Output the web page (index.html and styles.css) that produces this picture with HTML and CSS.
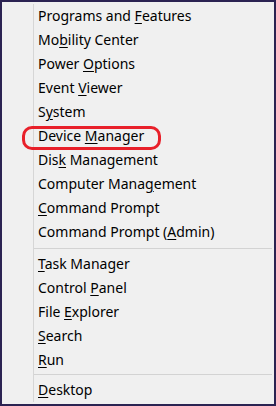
FILE: index.html
```html
<!DOCTYPE html>
<html lang="en">
<head>
    <meta charset="UTF-8">
    <title>Win+X menu</title>
    <link rel="stylesheet" href="styles.css">
</head>
<body>
<div class="menu">
    <ul class="list">
        <li>Programs and <u>F</u>eatures</li>
        <li>Mo<u>b</u>ility Center</li>
        <li>Power <u>O</u>ptions</li>
        <li>Event <u>V</u>iewer</li>
        <li>S<u>y</u>stem</li>
        <li class="marked">Device <u>M</u>anager<span class="ring"></span></li>
        <li>Dis<u>k</u> Management</li>
        <li>Computer Mana<u>g</u>ement</li>
        <li><u>C</u>ommand Prompt</li>
        <li>Command Prompt (<u>A</u>dmin)</li>
        <li class="sep"></li>
        <li><u>T</u>ask Manager</li>
        <li>Control <u>P</u>anel</li>
        <li>File <u>E</u>xplorer</li>
        <li><u>S</u>earch</li>
        <li><u>R</u>un</li>
        <li class="sep sep-low"></li>
        <li><u>D</u>esktop</li>
    </ul>
</div>
</body>
</html>
```

FILE: styles.css
```css
* {
    margin: 0;
    padding: 0
}

body {
    font-family: "Noto Sans", "Open Sans", sans-serif;
    font-size: 14px;
    color: #000;
}

.menu {
    width: 276px;
    height: 406px;
    box-sizing: border-box;
    border: 2px solid #2b2352;
    background-color: #f0f0f0;
    padding: 2px 2px 0 31px;
}

.list {
    list-style: none;
    border-left: 1px solid #d6d6d6;
    height: 398px;
    padding: 0 0 0 4px;
}

.list li {
    height: 24px;
    line-height: 24px;
    white-space: nowrap;
    position: relative;
}

.list li.sep {
    height: 1px;
    margin: 4px 0 3px -4px;
    background-color: #d3d3d3;
}

.list li.sep-low {
    margin-top: 2px;
}

.marked .ring {
    position: absolute;
    left: -16px;
    top: 2px;
    width: 133px;
    height: 18px;
    border: 3px solid #e8202a;
    border-radius: 10px;
}

u {
    text-decoration-thickness: 1px;
    text-underline-offset: 2px;
}
```
